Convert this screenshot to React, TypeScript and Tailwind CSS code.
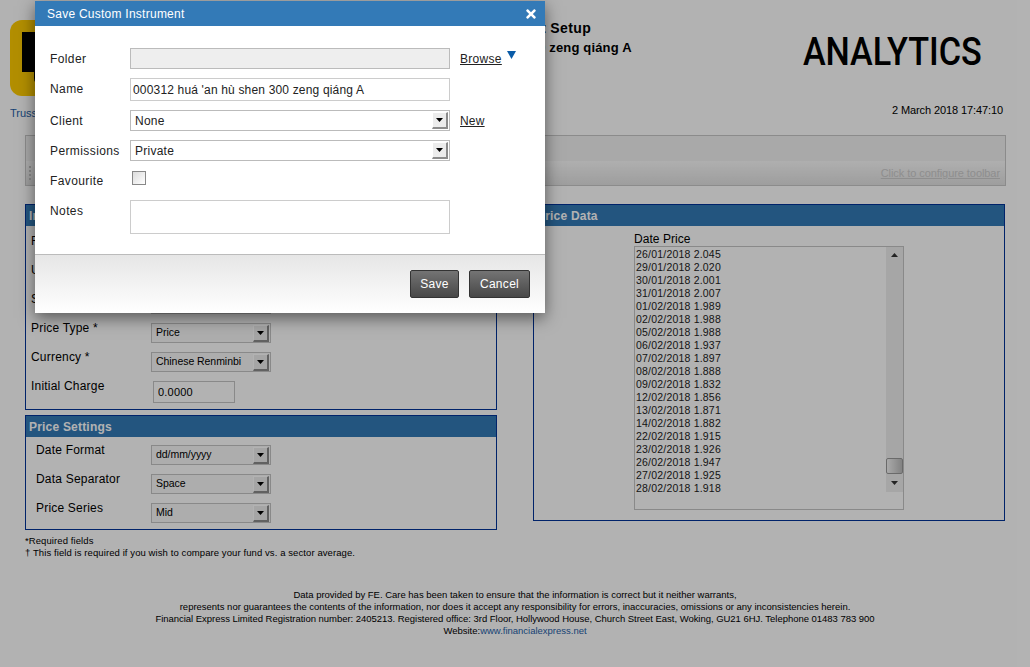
import { FaTimes } from "react-icons/fa"

const prices = [
  "26/01/2018 2.045", "29/01/2018 2.020", "30/01/2018 2.001", "31/01/2018 2.007",
  "01/02/2018 1.989", "02/02/2018 1.988", "05/02/2018 1.988", "06/02/2018 1.937",
  "07/02/2018 1.897", "08/02/2018 1.888", "09/02/2018 1.832", "12/02/2018 1.856",
  "13/02/2018 1.871", "14/02/2018 1.882", "22/02/2018 1.915", "23/02/2018 1.926",
  "26/02/2018 1.947", "27/02/2018 1.925", "28/02/2018 1.918",
]

function SelectArrow() {
  return (
    <svg width="7" height="4" viewBox="0 0 7 4">
      <polygon points="0,0 7,0 3.5,4" fill="#000" />
    </svg>
  )
}

function ArrowButton() {
  return (
    <span className="flex h-[17px] w-[16px] items-center justify-center border-t border-l border-t-white border-l-white border-r-2 border-b-2 border-r-[#8c8c8c] border-b-[#8c8c8c] bg-[#ececec]">
      <SelectArrow />
    </span>
  )
}

function PageSelect({ value }: { value: string }) {
  return (
    <div className="mt-[3px] flex h-[20px] w-[120px] items-center justify-between border border-[#c4c4c4] bg-[#f8f8f8] pr-px pl-[4px] text-[10.5px] tracking-[-0.05px]">
      <span>{value}</span>
      <ArrowButton />
    </div>
  )
}

function Field({ label, indent, children }: { label: string; indent?: boolean; children: React.ReactNode }) {
  return (
    <div className="flex h-[29px] items-start">
      <span className={`w-[125px] text-[12px] leading-4 tracking-[0.2px] ${indent ? "pl-[10px]" : "pl-[5px]"}`}>{label}</span>
      {children}
    </div>
  )
}

function Panel({ title, className, children }: { title: string; className?: string; children: React.ReactNode }) {
  return (
    <section className={`border border-[#003399] ${className ?? ""}`}>
      <h2 className="flex h-[21px] items-center bg-[#337ab7] pl-[3px] text-[12px] font-bold tracking-[0.2px] text-white">{title}</h2>
      {children}
    </section>
  )
}

function ModalSelect({ value }: { value: string }) {
  return (
    <div className="flex h-[21px] w-[320px] items-center justify-between border border-[#bbb] bg-white pr-px pl-[4px] text-[12px] tracking-[0.25px] text-[#222]">
      <span>{value}</span>
      <ArrowButton />
    </div>
  )
}

function ModalRow({ label, children }: { label: string; children: React.ReactNode }) {
  return (
    <div className="flex min-h-[21px] items-start pl-[15px]">
      <span className="w-[80px] pt-[3px] text-[12px] leading-4 tracking-[0.4px] text-[#222]">{label}</span>
      {children}
    </div>
  )
}

function ScrollArrow({ up }: { up?: boolean }) {
  return (
    <span className={`flex items-center justify-center ${up ? "h-[16px]" : "h-[18px]"}`}>
      <svg width="7" height="4" viewBox="0 0 7 4">
        <polygon points={up ? "0,4 7,4 3.5,0" : "0,0 7,0 3.5,4"} fill="#333" />
      </svg>
    </span>
  )
}

export default function App() {
  return (
    <div className="relative h-[667px] w-[1030px] overflow-hidden bg-white font-['Liberation_Sans',Arial,sans-serif] text-black">
      <header className="flex h-[135px] pt-5 pl-[10px]">
        <div className="w-[300px]">
          <svg width="76" height="76" viewBox="0 0 76 76">
            <rect width="76" height="76" rx="12" fill="#ffcc00" />
            <path d="M12 12h50v52H30q-6 0-6-6v-6H12z" fill="#000" />
          </svg>
          <a className="mt-[10px] block text-[11px] leading-[14px] text-[#1f5fa8]">Trusstnet</a>
        </div>
        <div className="w-[382px] text-center font-bold">
          <h1 className="text-[14px] leading-[16px] tracking-[0.4px]">Custom Instrument Setup</h1>
          <p className="mt-[4px] text-[13px] leading-[16px] tracking-[0.17px]">000312 huá 'an hù shen 300 zeng qiáng A</p>
        </div>
        <div className="flex flex-1 flex-col items-end pr-[27px]">
          <span className="mt-[9px] mr-[21px] origin-right scale-x-[0.9] font-['Roboto',sans-serif] text-[38px] leading-[46px] font-medium">ANALYTICS</span>
          <span className="mt-[28px] text-[11px] leading-[14px] tracking-[-0.1px]">2 March 2018 17:47:10</span>
        </div>
      </header>

      <div className="mr-[24px] ml-[25px] h-[51px] border border-[#c8c8c8]">
        <div className="h-[25px] bg-[#f2f2f2]" />
        <div className="flex h-[24px] items-center justify-between bg-gradient-to-b from-[#fbfbfb] to-[#e2e2e2] pr-[5px] pl-[3px]">
          <span className="flex flex-col gap-[2px]">
            <i className="h-[2px] w-[2px] bg-[#c4c4c4]" />
            <i className="h-[2px] w-[2px] bg-[#c4c4c4]" />
            <i className="h-[2px] w-[2px] bg-[#c4c4c4]" />
            <i className="h-[2px] w-[2px] bg-[#c4c4c4]" />
          </span>
          <a className="text-[11px] tracking-[-0.07px] text-[#cccccc] underline">Click to configure toolbar</a>
        </div>
      </div>

      <div className="mx-[25px] mt-[18px] flex justify-between">
        <div className="w-[472px]">
          <Panel title="Instrument Details">
            <div className="pt-[7px] pb-[2px]">
              <Field label="Fund Name *"><PageSelect value="" /></Field>
              <Field label="Unit Type"><PageSelect value="" /></Field>
              <Field label="Sector †"><PageSelect value="" /></Field>
              <Field label="Price Type *"><PageSelect value="Price" /></Field>
              <Field label="Currency *"><PageSelect value="Chinese Renminbi" /></Field>
              <Field label="Initial Charge">
                <input
                  readOnly
                  value="0.0000"
                  className="mt-[3px] ml-[2px] h-[22px] w-[82px] border border-[#c4c4c4] bg-white pl-[4px] text-[11px] tracking-[0.2px] text-black"
                />
              </Field>
            </div>
          </Panel>
          <Panel title="Price Settings" className="mt-[5px]">
            <div className="pt-[5px]">
              <Field label="Date Format" indent><PageSelect value="dd/mm/yyyy" /></Field>
              <Field label="Data Separator" indent><PageSelect value="Space" /></Field>
              <Field label="Price Series" indent><PageSelect value="Mid" /></Field>
            </div>
          </Panel>
          <p className="mt-[5px] text-[9.5px] leading-3 tracking-[0.09px]">*Required fields</p>
          <p className="text-[9.5px] leading-3 tracking-[0.09px]">† This field is required if you wish to compare your fund vs. a sector average.</p>
        </div>

        <Panel title="Price Data" className="h-[317px] w-[472px]">
          <div className="pt-[6px] pl-[100px]">
            <p className="text-[12px] leading-[14px] tracking-[0.05px]">Date Price</p>
            <div className="flex h-[264px] w-[270px] border border-[#c4c4c4] bg-white">
              <ul className="flex-1 pt-px pl-px text-[10.5px] leading-[13px] tracking-[0.2px] text-[#222]">
                {prices.map((row, i) => <li key={i}>{row}</li>)}
              </ul>
              <div className="flex w-[17px] flex-col">
                <div className="flex h-[245px] flex-col bg-[#eeeeee]">
                  <ScrollArrow up />
                  <div className="flex-1" />
                  <div className="h-[16px] rounded-[2px] border border-[#999] bg-gradient-to-r from-[#f4f4f4] to-[#bbbbbb]" />
                  <ScrollArrow />
                </div>
              </div>
            </div>
          </div>
        </Panel>
      </div>

      <footer className="mt-[30px] text-center text-[9.5px] leading-3 tracking-[-0.01px]">
        <p>Data provided by FE. Care has been taken to ensure that the information is correct but it neither warrants,</p>
        <p>represents nor guarantees the contents of the information, nor does it accept any responsibility for errors, inaccuracies, omissions or any inconsistencies herein.</p>
        <p className="tracking-[-0.03px]">Financial Express Limited Registration number: 2405213. Registered office: 3rd Floor, Hollywood House, Church Street East, Woking, GU21 6HJ. Telephone 01483 783 900</p>
        <p>Website:<a className="text-[#1f5fa8]">www.financialexpress.net</a></p>
      </footer>

      {/* dimmed backdrop and dialog */}
      <div className="absolute inset-0 bg-black/30" />
      <div className="absolute top-px left-[35px] flex h-[312px] w-[510px] flex-col bg-white shadow-[0_5px_15px_rgba(0,0,0,0.5)]">
        <div className="flex h-[25px] items-center justify-between bg-[#337ab7] pr-[7px] pl-[12px] text-[12px] tracking-[0.25px] text-white">
          <span>Save Custom Instrument</span>
          <FaTimes size={14} />
        </div>
        <div className="flex flex-col gap-[9px] pt-[22px]">
          <ModalRow label="Folder">
            <div className="h-[21px] w-[320px] border border-[#bbb] bg-[#eeeeee]" />
            <a className="ml-[10px] pt-[3px] text-[12px] leading-4 tracking-[0.3px] text-[#222] underline">Browse</a>
            <svg className="mt-[3px] ml-[5px]" width="9" height="8" viewBox="0 0 9 8">
              <polygon points="0,0 9,0 4.5,8" fill="#0a5ca8" />
            </svg>
          </ModalRow>
          <ModalRow label="Name">
            <input
              readOnly
              value="000312 huá 'an hù shen 300 zeng qiáng A"
              className="h-[23px] w-[320px] border border-[#ccc] bg-white pl-[2px] text-[12px] tracking-[0.17px] text-[#222]"
            />
          </ModalRow>
          <ModalRow label="Client">
            <ModalSelect value="None" />
            <a className="ml-[10px] pt-[3px] text-[12px] leading-4 tracking-[0.2px] text-[#222] underline">New</a>
          </ModalRow>
          <ModalRow label="Permissions">
            <ModalSelect value="Private" />
          </ModalRow>
          <ModalRow label="Favourite">
            <span className="mt-px ml-[2px] h-[14px] w-[14px] border border-[#888] bg-gradient-to-br from-[#dcdcdc] to-white" />
          </ModalRow>
          <ModalRow label="Notes">
            <div className="h-[34px] w-[320px] border border-[#ccc] bg-white" />
          </ModalRow>
        </div>
        <div className="mt-[20px] flex flex-1 justify-end gap-[10px] border-t border-[#bbb] bg-gradient-to-b from-[#e6e6e6] to-white pt-[15px] pr-[15px]">
          <button className="h-[28px] w-[49px] rounded-[2px] border border-[#333] bg-gradient-to-b from-[#747474] to-[#484848] text-[12px] tracking-[0.3px] text-white">Save</button>
          <button className="h-[28px] w-[61px] rounded-[2px] border border-[#333] bg-gradient-to-b from-[#747474] to-[#484848] text-[12px] tracking-[0.3px] text-white">Cancel</button>
        </div>
      </div>
    </div>
  )
}
